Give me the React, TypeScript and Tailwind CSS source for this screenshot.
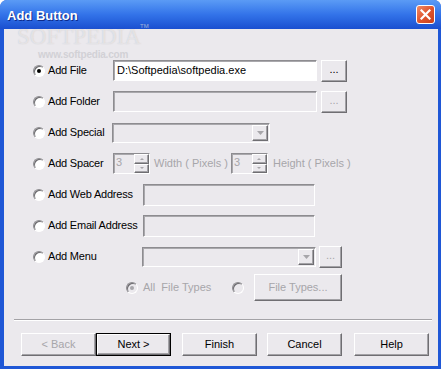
import React from 'react';

const face = 'bg-[#ebe9ed]';
const sunken =
  'border border-t-[#8d8c90] border-l-[#8d8c90] border-b-white border-r-white shadow-[inset_1px_1px_0_#a9a8ac]';
const raised =
  'border border-t-white border-l-white border-b-[#6f6e72] border-r-[#6f6e72] shadow-[inset_-1px_-1px_0_#a3a2a6]';

const Radio: React.FC<{ checked?: boolean; disabled?: boolean }> = ({ checked, disabled }) => (
  <div
    className={`w-[12px] h-[12px] shrink-0 rounded-full border border-t-[#8d8c90] border-l-[#8d8c90] border-b-white border-r-white shadow-[inset_1px_1px_0_#6b6a6e] flex items-center justify-center ${
      disabled ? face : 'bg-white'
    }`}
  >
    {checked && <div className={`w-[4px] h-[4px] rounded-full ${disabled ? 'bg-[#a7a6aa]' : 'bg-black'}`} />}
  </div>
);

const Option: React.FC<{ label: string; w: string; checked?: boolean }> = ({ label, w, checked }) => (
  <div className={`flex items-center gap-[3px] shrink-0 ${w}`}>
    <Radio checked={checked} />
    <span className="whitespace-nowrap tracking-[-0.2px]">{label}</span>
  </div>
);

const DotsButton: React.FC<{ disabled?: boolean; w: string }> = ({ disabled, w }) => (
  <div
    className={`${w} h-[22px] ${raised} flex items-center justify-center pb-[3px] ${
      disabled ? 'text-[#a7a6aa]' : 'text-black'
    }`}
  >
    ...
  </div>
);

const Arrow: React.FC = () => (
  <svg width="7" height="4" viewBox="0 0 7 4">
    <path d="M0 0h7L3.5 4z" fill="#a7a6aa" />
  </svg>
);

const Select: React.FC<{ w: string }> = ({ w }) => (
  <div className={`${w} h-[20px] ${sunken} flex justify-end p-[1px]`}>
    <div className={`w-[16px] h-full ${raised} flex items-center justify-center`}>
      <Arrow />
    </div>
  </div>
);

const Spin: React.FC = () => (
  <div className={`w-[37px] h-[21px] shrink-0 ${sunken} flex items-stretch`}>
    <div className="flex-1 pl-[2px] leading-[17px] text-[#a7a6aa]">3</div>
    <div className="w-[15px] flex flex-col">
      <div className={`flex-1 ${raised} flex items-center justify-center`}>
        <div className="w-0 h-0 border-l-[2px] border-r-[2px] border-b-[2px] border-l-transparent border-r-transparent border-b-[#a7a6aa]" />
      </div>
      <div className={`flex-1 ${raised} flex items-center justify-center`}>
        <div className="w-0 h-0 border-l-[2px] border-r-[2px] border-t-[2px] border-l-transparent border-r-transparent border-t-[#a7a6aa]" />
      </div>
    </div>
  </div>
);

const WizButton: React.FC<{ label: string; disabled?: boolean; def?: boolean }> = ({ label, disabled, def }) => (
  <div
    className={`w-[75px] h-[23px] flex items-center justify-center ${
      def ? 'border border-black' : ''
    } ${disabled ? 'text-[#a7a6aa]' : 'text-black'}`}
  >
    <div className={`w-full h-full ${raised} flex items-center justify-center`}>{label}</div>
  </div>
);

const App: React.FC = () => {
  return (
    <div className="w-[441px] h-[369px] bg-[#1f57d6] rounded-t-[7px] flex flex-col relative overflow-hidden font-['Liberation_Sans',Arial,sans-serif] text-[11px]">
      <div className="h-[29px] shrink-0 bg-gradient-to-b from-[#5b9bf5] via-[#3373e9] to-[#1b4fd0] flex items-center justify-between pl-[7px] pr-[6px]">
        <span className="text-white font-bold text-[13px] [text-shadow:1px_1px_0_#0d2a8a] pt-[2px]">Add Button</span>
        <div className="w-[19px] h-[19px] rounded-[3px] border border-white bg-gradient-to-br from-[#f08a64] via-[#e0552e] to-[#c8401c] flex items-center justify-center">
          <svg width="11" height="11" viewBox="0 0 11 11">
            <path d="M1.5 1.5l8 8M9.5 1.5l-8 8" stroke="white" strokeWidth="2.2" strokeLinecap="square" />
          </svg>
        </div>
      </div>

      <div className={`flex-1 ml-[4px] mr-[3px] mb-[3px] ${face} flex flex-col pt-[26px] pl-[29px]`}>
        <div className="flex items-center h-[31px]">
          <Option label="Add File" w="w-[80px]" checked />
          <div className={`w-[204px] h-[21px] ${sunken} bg-white px-[3px] leading-[19px] text-black`}>D:\Softpedia\softpedia.exe</div>
          <div className="w-[4px]" />
          <DotsButton w="w-[26px]" />
        </div>
        <div className="flex items-center h-[31px]">
          <Option label="Add Folder" w="w-[80px]" />
          <div className={`w-[204px] h-[21px] ${sunken}`} />
          <div className="w-[4px]" />
          <DotsButton w="w-[26px]" disabled />
        </div>
        <div className="flex items-center h-[31px]">
          <Option label="Add Special" w="w-[79px]" />
          <Select w="w-[158px]" />
        </div>
        <div className="flex items-center h-[31px] text-[#a7a6aa]">
          <div className="text-black">
            <Option label="Add Spacer" w="w-[80px]" />
          </div>
          <Spin />
          <span className="ml-[4px] mr-[3px] whitespace-nowrap">Width ( Pixels )</span>
          <Spin />
          <span className="ml-[5px] whitespace-nowrap">Height ( Pixels )</span>
        </div>
        <div className="flex items-center h-[31px]">
          <Option label="Add Web Address" w="w-[110px]" />
          <div className={`w-[172px] h-[22px] ${sunken}`} />
        </div>
        <div className="flex items-center h-[31px]">
          <Option label="Add Email Address" w="w-[110px]" />
          <div className={`w-[172px] h-[22px] ${sunken}`} />
        </div>
        <div className="flex items-center h-[31px]">
          <Option label="Add Menu" w="w-[109px]" />
          <Select w="w-[174px]" />
          <div className="w-[3px]" />
          <DotsButton w="w-[23px]" disabled />
        </div>
        <div className="flex items-center h-[31px] pl-[93px] text-[#a7a6aa]">
          <Radio checked disabled />
          <span className="ml-[5px] w-[89px] whitespace-nowrap">All&nbsp; File Types</span>
          <Radio disabled />
          <div className={`ml-[10px] w-[88px] h-[27px] ${raised} flex items-center justify-center`}>File Types...</div>
        </div>

        <div className="mt-[16px] ml-[-19px] mr-[6px] h-[2px] border-t border-t-[#a3a2a6] border-b border-b-white" />

        <div className="flex items-center mt-[12px] ml-[-12px]">
          <WizButton label="< Back" disabled />
          <WizButton label="Next >" def />
          <div className="w-[11px]" />
          <WizButton label="Finish" />
          <div className="w-[10px]" />
          <WizButton label="Cancel" />
          <div className="w-[12px]" />
          <WizButton label="Help" />
        </div>
      </div>

      <div className="absolute left-[17px] top-[20px] pointer-events-none select-none font-['Liberation_Serif',serif] text-[23px] text-white/50 [text-shadow:0_0_1px_rgba(120,120,130,0.35)]">
        SOFTPEDIA
        <span className="absolute left-[123px] top-[3px] text-[6px] leading-none font-['Liberation_Sans',sans-serif]">TM</span>
      </div>
      <div className="absolute left-[38px] top-[47px] pointer-events-none select-none text-[10px] font-bold text-[#d2d1d6] tracking-[-0.2px]">
        www.softpedia.com
      </div>
    </div>
  );
};

export default App;
